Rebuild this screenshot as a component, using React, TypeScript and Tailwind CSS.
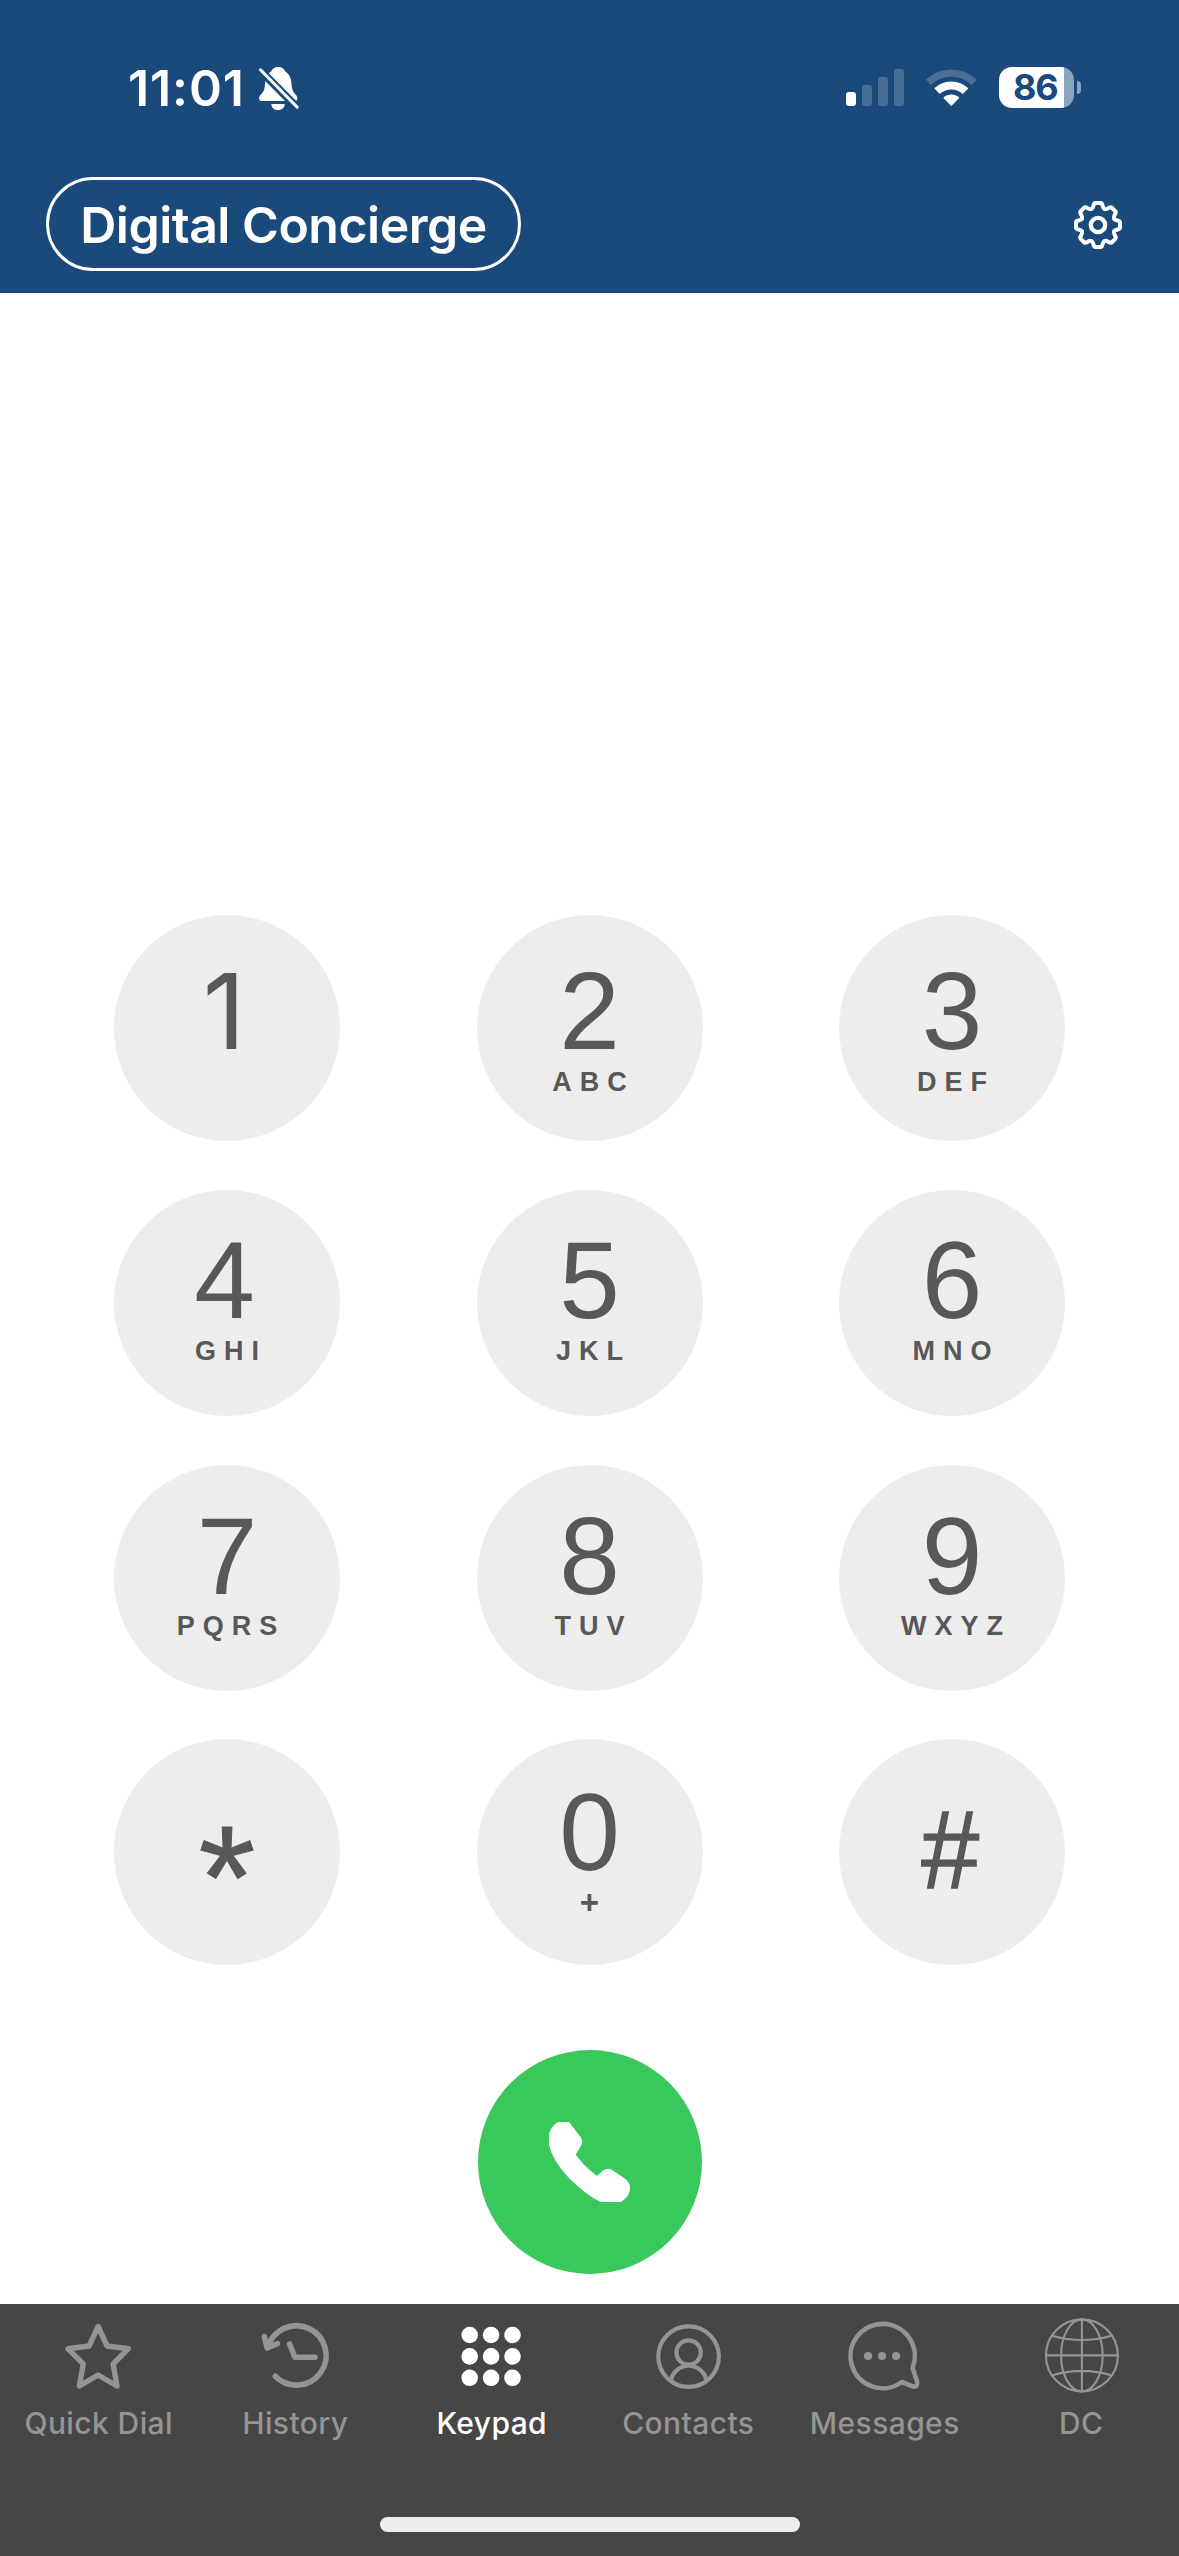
import React from 'react';

interface KeyProps {
  digit: string;
  letters?: string;
  digitClass?: string;
  lettersClass?: string;
}

const rows: { id: string; pad: string; gap: string; keys: KeyProps[] }[] = [
  {
    id: 'row-1',
    pad: 'pt-[41px]',
    gap: 'mt-[3px]',
    keys: [
      { digit: '1', digitClass: "font-['Inter',sans-serif] text-[105px] -ml-[6px]" },
      { digit: '2', letters: 'ABC' },
      { digit: '3', letters: 'DEF' },
    ],
  },
  {
    id: 'row-2',
    pad: 'pt-[35px]',
    gap: 'mt-[3px]',
    keys: [
      { digit: '4', letters: 'GHI', digitClass: 'text-[109px] -ml-[5px]' },
      { digit: '5', letters: 'JKL' },
      { digit: '6', letters: 'MNO' },
    ],
  },
  {
    id: 'row-3',
    pad: 'pt-[36px]',
    gap: 'mt-[2px]',
    keys: [
      { digit: '7', letters: 'PQRS' },
      { digit: '8', letters: 'TUV' },
      { digit: '9', letters: 'WXYZ' },
    ],
  },
  {
    id: 'row-4',
    pad: 'pt-[38px]',
    gap: 'mt-[2px]',
    keys: [
      { digit: '*', digitClass: 'text-[146px] pt-[46px] [-webkit-text-stroke:1px_#585858]' },
      { digit: '0', letters: '+', lettersClass: 'text-[33px]' },
      { digit: '#', digitClass: 'text-[112px] pt-[18px] -ml-[3px] [-webkit-text-stroke:1.5px_#585858] scale-x-[0.93]' },
    ],
  },
];

const BellOffIcon = () => (
  <svg className="h-[45px] w-[40px]" viewBox="0 0 40 45">
    <path
      d="M19.2 1C14.5 1 13 3.5 12.2 5.5C8 8 6.5 12 6 18C5.7 24 4.5 26 1 29.5C-.8 32 .2 35 2.5 35H36C38.4 35 39 32 37.5 29.5C34 26 33 24 32.5 18C32 12 30.5 8 26.2 5.5C25.4 3.5 24 1 19.2 1Z"
      fill="#fff"
    />
    <path d="M12.3 38H25.7C25.5 42 22.5 44 19 44S12.5 42 12.3 38Z" fill="#fff" />
    <path d="M-2 1L42 45.4" stroke="#194a7b" strokeWidth="8" />
    <path d="M1.7 4L38 41" stroke="#fff" strokeWidth="3.2" strokeLinecap="round" />
  </svg>
);

const WifiIcon = () => (
  <svg className="h-[38px] w-[51px]" viewBox="0 0 51 38" fill="none">
    <path d="M2.4 13.3A33 33 0 0 1 48.2 13.3" stroke="#4a6f97" strokeWidth="7.2" />
    <path d="M11 22.2A20.6 20.6 0 0 1 39.6 22.2" stroke="#fff" strokeWidth="8" />
    <path d="M25.3 37L17.8 29.6Q17.2 28.6 18.2 27.8A11.7 11.7 0 0 1 32.4 27.8Q33.4 28.6 32.8 29.6Z" fill="#fff" />
  </svg>
);

const GearIcon = () => (
  <svg className="mt-[2px] h-[52px] w-[52px]" viewBox="-26 -26 52 52" fill="none" stroke="#fff" strokeWidth="4" strokeLinecap="round">
    {[0, 45, 90, 135, 180, 225, 270, 315].map((angle) => (
      <path
        key={angle}
        d="M-6.6-16C-3.9-17.1-5-22-2.8-22H2.8C5-22 3.9-17.1 6.6-16"
        transform={`rotate(${angle})`}
      />
    ))}
    <circle r="7.2" strokeWidth="4.3" />
  </svg>
);

const StarIcon = () => (
  <path
    d="M40.1 10.5L49.1 30L70.2 32.8L55.1 48L59 70L40.1 59L21.3 70L25.3 48L10 32.8L31.1 30Z"
    strokeWidth="5.4"
    strokeLinejoin="round"
  />
);

const HistoryIcon = () => (
  <g strokeWidth="5.6" strokeLinecap="round" strokeLinejoin="round">
    <path d="M20.3 60.3A29.7 29.7 0 1 0 12.8 31.5" />
    <path d="M9.3 20.5L12.2 32L22.4 27.7" />
    <path d="M34.6 28L39.9 41.3H60" />
  </g>
);

const KeypadIcon = () => (
  <g fill="currentColor" stroke="none">
    {[19, 40.4, 61.8].map((y) =>
      [18.7, 40.1, 61.5].map((x) => <circle key={`${x}-${y}`} cx={x} cy={y} r="8.3" />)
    )}
  </g>
);

const ContactsIcon = () => (
  <g strokeWidth="4.2">
    <circle cx="40.6" cy="40.6" r="30.3" />
    <circle cx="40.6" cy="36.5" r="12.2" />
    <path d="M23 64.5A18 18 0 0 1 58.4 64.5" />
  </g>
);

const MessagesIcon = () => (
  <>
    <path
      d="M57.8 66A32.2 32.2 0 1 1 68.6 52L73 65.4Q74.2 71.2 69.2 70.6Z"
      strokeWidth="4.6"
      strokeLinejoin="round"
    />
    <g fill="currentColor" stroke="none">
      <circle cx="24.1" cy="40" r="4.1" />
      <circle cx="38.1" cy="40" r="4.1" />
      <circle cx="52.1" cy="40" r="4.1" />
    </g>
  </>
);

const GlobeIcon = () => (
  <g strokeWidth="2.1">
    <circle cx="40.9" cy="39.4" r="36" />
    <ellipse cx="40.9" cy="39.4" rx="20.8" ry="36" />
    <path d="M40.9 3.4V75.4M4.9 39.4H76.9M11 19.7Q40.9 28.3 70.8 19.7M11 59.5Q40.9 50.3 70.8 59.5" />
  </g>
);

const tabs = [
  { label: 'Quick Dial', icon: <StarIcon /> },
  { label: 'History', icon: <HistoryIcon /> },
  { label: 'Keypad', icon: <KeypadIcon />, active: true },
  { label: 'Contacts', icon: <ContactsIcon /> },
  { label: 'Messages', icon: <MessagesIcon /> },
  { label: 'DC', icon: <GlobeIcon /> },
];

const StatusBar = () => (
  <div className="flex h-[177px] items-start justify-between pl-[128px] pr-[98px] text-white">
    <div className="flex items-start pt-[66px]">
      <span className="w-[131px] whitespace-nowrap text-[50px] font-semibold leading-[44px] tracking-[0.9px]">11:01</span>
      <BellOffIcon />
    </div>
    <div className="flex items-start pt-[67px]">
      <div className="mr-[22px] mt-[2px] flex h-[37px] items-end gap-[6px]">
        <div className="h-[14px] w-[10px] rounded-[3px] bg-white" />
        <div className="h-[21px] w-[10px] rounded-[3px] bg-[#4a6f97]" />
        <div className="h-[29px] w-[10px] rounded-[3px] bg-[#4a6f97]" />
        <div className="h-[37px] w-[10px] rounded-[3px] bg-[#4a6f97]" />
      </div>
      <div className="mr-[22px] mt-[2px]">
        <WifiIcon />
      </div>
      <div className="flex items-center gap-[3px]">
        <div className="flex h-[41px] w-[75px] items-center rounded-[13px] bg-gradient-to-r from-white from-[65px] to-[#8ca4bd] to-[65px] pl-[14px]">
          <span className="text-[36px] font-bold leading-[41px] tracking-[-1.2px] text-[#194a7b]">86</span>
        </div>
        <div className="h-[13px] w-[4px] rounded-r-full bg-[#8ca4bd]" />
      </div>
    </div>
  </div>
);

const Key: React.FC<KeyProps & { pad: string; gap: string }> = ({
  digit,
  letters,
  digitClass = 'text-[109px]',
  lettersClass = 'text-[27px]',
  pad,
  gap,
}) => (
  <button className={`flex h-[226px] w-[226px] flex-col items-center rounded-full bg-[#ededed] text-[#585858] ${pad}`}>
    <span className={`leading-[110px] ${digitClass}`}>{digit}</span>
    {letters && (
      <span className={`-mr-[8px] font-bold leading-[27px] tracking-[8px] ${lettersClass} ${gap}`}>{letters}</span>
    )}
  </button>
);

const App: React.FC = () => {
  return (
    <div className="flex h-[2556px] w-[1179px] flex-col bg-white font-['Inter',sans-serif]">
      <header className="h-[293px] bg-[#194a7b]">
        <StatusBar />
        <div className="flex items-center justify-between pl-[46px] pr-[55px]">
          <div className="flex h-[94px] w-[475px] items-center justify-center rounded-[47px] border-3 border-white pt-[2px]">
            <span className="whitespace-nowrap text-[50px] font-semibold leading-[60px] tracking-[-0.5px] text-white">Digital Concierge</span>
          </div>
          <GearIcon />
        </div>
      </header>

      <main className="flex flex-1 flex-col items-center pt-[622px] font-['Liberation_Sans',sans-serif]">
        <div className="flex w-[951px] flex-col gap-[48.8px]">
          {rows.map((row) => (
            <div key={row.id} className="flex justify-between">
              {row.keys.map((item) => (
                <Key key={item.digit} {...item} pad={row.pad} gap={row.gap} />
              ))}
            </div>
          ))}
        </div>
        <button className="mt-[85px] flex h-[224px] w-[224px] items-center justify-center rounded-full bg-[#39c85b]">
          <svg className="h-[80px] w-[81px]" viewBox="0 0 81 80" fill="#fff">
            <path d="M9.3 0H20L31.7 15.3Q34 19 32.6 22.5L26.7 32.7Q36 45 48 54L54 48.6Q58 45.6 62 47.3L75 56Q80 59.5 81 64V68Q79 76 71.7 80H51.7Q39 74 27.7 63.3Q10 48 2 29.7L0 23V12Q2.5 3.5 9.3 0Z" />
          </svg>
        </button>
      </main>

      <nav className="flex h-[252px] flex-col items-center bg-[#464646]">
        <div className="grid h-[213px] w-full grid-cols-6 pt-[12px]">
          {tabs.map((tab) => (
            <div key={tab.label} className={`flex flex-col items-center ${tab.active ? 'text-white' : 'text-[#949494]'}`}>
              <svg className="h-[80px] w-[80px]" viewBox="0 0 80 80" fill="none" stroke="currentColor">
                {tab.icon}
              </svg>
              <span className="-mr-[1px] mt-[9px] whitespace-nowrap text-[30px] font-medium leading-[36px] tracking-[0.4px]">{tab.label}</span>
            </div>
          ))}
        </div>
        <div className="h-[15px] w-[420px] rounded-full bg-[#eee]" />
      </nav>
    </div>
  );
};

export default App;
